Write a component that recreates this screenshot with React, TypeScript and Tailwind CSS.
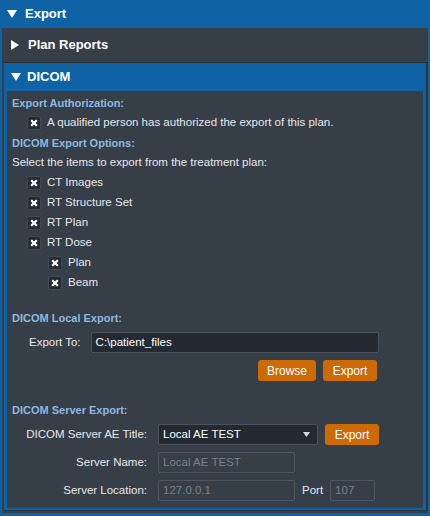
import React from "react"

function Caret({ open }: { open: boolean }) {
  return open ? (
    <svg width="10" height="8" viewBox="0 0 10 8" className="shrink-0">
      <path d="M0 0 H10 L5 8 Z" fill="#ffffff" />
    </svg>
  ) : (
    <svg width="8" height="10" viewBox="0 0 8 10" className="shrink-0">
      <path d="M0 0 V10 L8 5 Z" fill="#ffffff" />
    </svg>
  )
}

function Check({ label, sub }: { label: string; sub?: boolean }) {
  return (
    <div className={`h-[20px] flex items-center gap-[6px] ${sub ? "pl-[41px]" : "pl-[20px]"}`}>
      <span className="w-[14px] h-[14px] rounded-[2px] bg-[#262c33] border border-[#434a54] flex items-center justify-center">
        <svg width="8" height="8" viewBox="0 0 8 8">
          <path d="M1.2 1.2 L6.8 6.8 M6.8 1.2 L1.2 6.8" stroke="#ffffff" strokeWidth="2.2" />
        </svg>
      </span>
      <span className="text-[#e6e8ea]">{label}</span>
    </div>
  )
}

function Heading({ children }: { children: React.ReactNode }) {
  return <div className="h-[20px] flex items-center pl-[5px] text-[#8fb9e0] font-bold text-[11px]">{children}</div>
}

function OrangeButton({ children, w }: { children: React.ReactNode; w: string }) {
  return (
    <button className={`${w} h-[21px] rounded-[3px] bg-[#cc6a06] text-white text-[12px] flex items-center justify-center`}>
      {children}
    </button>
  )
}

export default function App() {
  return (
    <div className="w-[430px] h-[516px] bg-[#0f63a4] px-[2px] pb-[3px] flex flex-col font-['Liberation_Sans',Arial,sans-serif] text-[11.5px]">
      <div className="h-[28px] shrink-0 flex items-center gap-[8px] pl-[5px] text-white font-bold text-[13px]">
        <Caret open />
        Export
      </div>

      <div className="flex-1 bg-[#363e48] flex flex-col pb-[2px] min-h-0">
        <div className="h-[34px] shrink-0 flex items-center gap-[9px] pl-[9px] text-white font-bold text-[13px]">
          <Caret open={false} />
          Plan Reports
        </div>

        {/* DICOM section */}
        <div className="flex-1 ml-[2px] flex flex-col bg-[#0f63a4] border-t border-[#232a31] border-r-2 border-r-[#2b3139] border-b border-b-[#2b3139] pb-[2px] min-h-0">
          <div className="h-[28px] shrink-0 flex items-center gap-[6px] pl-[7px] text-white font-bold text-[13px]">
            <Caret open />
            DICOM
          </div>

          <div className="flex-1 mx-[3px] bg-[#363e48] flex flex-col pt-[2px] text-[#e6e8ea]">
            <Heading>Export Authorization:</Heading>
            <Check label="A qualified person has authorized the export of this plan." />
            <Heading>DICOM Export Options:</Heading>
            <div className="h-[20px] flex items-center pl-[5px]">Select the items to export from the treatment plan:</div>
            <Check label="CT Images" />
            <Check label="RT Structure Set" />
            <Check label="RT Plan" />
            <Check label="RT Dose" />
            <Check label="Plan" sub />
            <Check label="Beam" sub />

            <div className="mt-[15px]">
              <Heading>DICOM Local Export:</Heading>
            </div>
            <div className="mt-[4px] flex items-center pl-[22px] gap-[10px]">
              <span>Export To:</span>
              <div className="w-[288px] h-[21px] bg-[#232a31] border border-[#4a525d] rounded-[2px] flex items-center px-[4px] text-white">
                C:\patient_files
              </div>
            </div>
            <div className="mt-[7px] flex justify-end gap-[7px] pr-[46px]">
              <OrangeButton w="w-[58px]">Browse</OrangeButton>
              <OrangeButton w="w-[54px]">Export</OrangeButton>
            </div>

            <div className="mt-[19px]">
              <Heading>DICOM Server Export:</Heading>
            </div>
            <div className="mt-[4px] grid grid-cols-[140px_auto] gap-x-[11px] gap-y-[7px] items-center">
              <span className="text-right">DICOM Server AE Title:</span>
              <div className="flex items-center gap-[7px]">
                <div className="w-[160px] h-[21px] bg-[#232a31] border border-[#4a525d] rounded-[2px] flex items-center justify-between pl-[4px] pr-[7px] text-white">
                  Local AE TEST
                  <svg width="7" height="5" viewBox="0 0 7 5">
                    <path d="M0 0 H7 L3.5 5 Z" fill="#d8dadc" />
                  </svg>
                </div>
                <OrangeButton w="w-[54px]">Export</OrangeButton>
              </div>

              <span className="text-right">Server Name:</span>
              <div className="w-[137px] h-[21px] border border-[#4e5561] rounded-[2px] flex items-center px-[4px] text-[#7b8189]">
                Local AE TEST
              </div>

              <span className="text-right">Server Location:</span>
              <div className="flex items-center">
                <div className="w-[137px] h-[21px] border border-[#4e5561] rounded-[2px] flex items-center px-[4px] text-[#7b8189]">
                  127.0.0.1
                </div>
                <span className="ml-[7px] mr-[7px]">Port</span>
                <div className="w-[45px] h-[21px] border border-[#4e5561] rounded-[2px] flex items-center px-[4px] text-[#7b8189]">
                  107
                </div>
              </div>
            </div>
          </div>
        </div>
      </div>
    </div>
  )
}
